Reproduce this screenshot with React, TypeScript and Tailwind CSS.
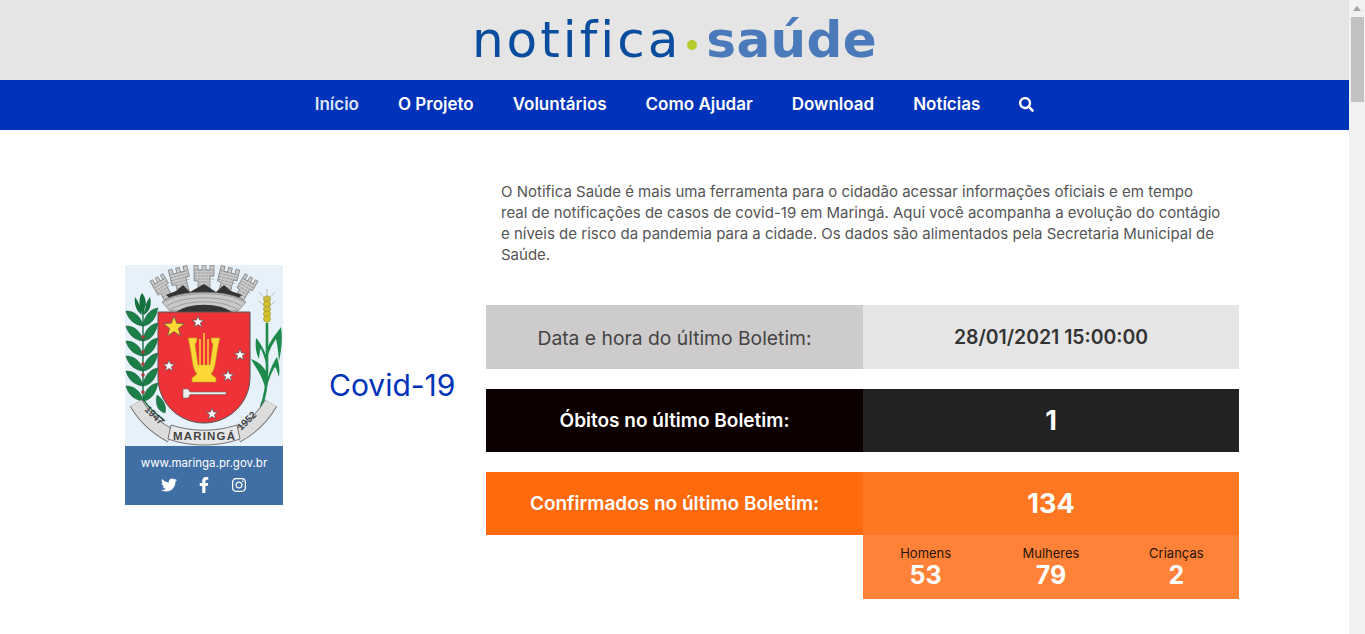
import { FaFacebookF, FaInstagram, FaSearch, FaTwitter } from 'react-icons/fa'

const NAV_ITEMS = ['Início', 'O Projeto', 'Voluntários', 'Como Ajudar', 'Download', 'Notícias']

const BREAKDOWN = [
  { label: 'Homens', value: '53' },
  { label: 'Mulheres', value: '79' },
  { label: 'Crianças', value: '2' },
]

const INTRO_LINES = [
  'O Notifica Saúde é mais uma ferramenta para o cidadão acessar informações oficiais e em tempo',
  'real de notificações de casos de covid-19 em Maringá. Aqui você acompanha a evolução do contágio',
  'e níveis de risco da pandemia para a cidade. Os dados são alimentados pela Secretaria Municipal de',
  'Saúde.',
]

const LEAF_ROWS = [46, 61, 76, 91, 106, 121]

function Star({ x, y, r, fill }: { x: number; y: number; r: number; fill: string }) {
  const points = Array.from({ length: 10 }, (_, i) => {
    const radius = i % 2 === 0 ? r : r * 0.42
    const angle = -Math.PI / 2 + (i * Math.PI) / 5
    return `${x + radius * Math.cos(angle)},${y + radius * Math.sin(angle)}`
  }).join(' ')
  return <polygon points={points} fill={fill} stroke="#555" strokeWidth="0.7" />
}

function Tower({ x, y, w, h, rotate }: { x: number; y: number; w: number; h: number; rotate: number }) {
  const step = w / 5
  return (
    <g transform={`rotate(${rotate} ${x + w / 2} ${y + h})`}>
      <path
        d={`M${x} ${y} h${step} v5 h${step} v-5 h${step} v5 h${step} v-5 h${step} v11 h-${step} V${y + h} H${x + step} V${y + 16} H${x} Z`}
        fill="#c9c9c9"
        stroke="#777"
        strokeWidth="0.7"
      />
      {[5, 8, 11, 14, 17, 20, 23].map(d => (
        <line key={d} x1={x + (d > 16 ? step : 0)} x2={x + w - (d > 16 ? step : 0)} y1={y + d} y2={y + d} stroke="#858585" strokeWidth="0.6" strokeDasharray="3 0.7" />
      ))}
    </g>
  )
}

function Crest() {
  return (
    <svg viewBox="0 0 158 181" className="block w-[158px] h-[181px] bg-[#e6f1fa]">
      {/* crown */}
      <Tower x={37} y={9} w={15} h={26} rotate={-30} />
      <Tower x={106} y={9} w={15} h={26} rotate={30} />
      <Tower x={50} y={2} w={19} h={29} rotate={-14} />
      <Tower x={89} y={2} w={19} h={29} rotate={14} />
      <Tower x={69} y={0} w={20} h={29} rotate={0} />
      <path d="M41 30 L51 26 L58 20 L65 27 L79 19 L91 27 L99 20 L106 26 L117 30 L110 36 H48 Z" fill="#333" />
      <path d="M37 37 C52 24 106 24 121 37 L113 46 H45 Z" fill="#c9c9c9" stroke="#777" strokeWidth="0.7" />
      <path d="M39 37 C54 26 104 26 119 37 M42 41 C57 30 101 30 116 41 M45 45 C60 34 98 34 113 45" fill="none" stroke="#8a8a8a" strokeWidth="0.7" />
      <path d="M50 48 C62 37 96 37 108 48 Z" fill="#333" />

      {/* left branch */}
      <path d="M18 44 V132 C20 140 30 148 40 156" fill="none" stroke="#15713f" strokeWidth="1.4" />
      <path d="M17 28 C22 34 22 42 18 50 C14 42 13 34 17 28 Z M10 32 C14 37 16 43 17 50 C11 46 9 39 10 32 Z M25 32 C21 37 19 43 19 50 C25 46 27 39 25 32 Z" fill="#15713f" />
      {LEAF_ROWS.map(y => (
        <g key={y} fill="#1a8048" stroke="#0c4f2c" strokeWidth="0.5">
          <path d={`M18 ${y + 15} C9 ${y + 14} 3 ${y + 8} 1 ${y} C10 ${y} 16 ${y + 6} 18 ${y + 15} Z`} />
          <path d={`M18 ${y + 15} C27 ${y + 14} 31 ${y + 6} 33 ${y - 3} C25 ${y - 2} 19 ${y + 5} 18 ${y + 15} Z`} />
        </g>
      ))}
      <path d="M40 148 C33 146 30 140 32 130 C38 134 42 141 40 148 Z" fill="#1a8048" stroke="#0c4f2c" strokeWidth="0.5" />
      {[72, 87, 99, 110, 127].map(y => (
        <circle key={y} cx={18} cy={y} r="1.8" fill="#b03a3a" />
      ))}

      {/* right corn and wheat */}
      <path d="M142 58 V106 C142 122 140 132 136 142" fill="none" stroke="#1e8a4c" strokeWidth="2.6" />
      <path d="M142 84 C146 74 152 68 156 62 C158 74 156 88 154 96 C153 84 152 78 151 74 C148 78 145 84 142 92 Z" fill="#1e8a4c" />
      <path d="M142 92 C138 82 134 76 131 73 C130 82 131 88 134 94 C135 86 135 84 136 84 C138 88 140 94 142 102 Z" fill="#1e8a4c" />
      <path d="M142 108 C138 100 132 96 126 94 C130 102 136 108 140 122 Z" fill="#1e8a4c" />
      <path d="M142 116 C145 104 149 96 152 92 C154 98 155 104 154 112 C152 106 151 102 150 102 C147 106 144 114 141 124 Z" fill="#1e8a4c" />
      <path d="M142 30 V58" stroke="#b5a51e" strokeWidth="1" />
      {[34, 39, 44, 49, 54].map(y => (
        <ellipse key={y} cx={142} cy={y} rx="3.6" ry="3" fill="#d5c22a" stroke="#8f8520" strokeWidth="0.5" />
      ))}
      <path d="M142 36 L134 27 M142 36 L150 27 M142 44 L134 36 M142 44 L150 36 M142 32 V24" stroke="#a8a890" strokeWidth="0.6" />

      {/* shield */}
      <path d="M33 47 H125 V112 C125 138 104 158 79 158 C54 158 33 138 33 112 Z" fill="#ee3237" stroke="#555" strokeWidth="1" />
      <Star x={49} y={62} r={11} fill="#fdd835" />
      <Star x={73} y={57} r={6} fill="#fff" />
      <Star x={115} y={90} r={6} fill="#fff" />
      <Star x={44} y={101} r={6} fill="#fff" />
      <Star x={103} y={111} r={6} fill="#fff" />
      <Star x={87} y={149} r={6} fill="#fff" />
      {/* lyre */}
      <path
        fillRule="evenodd"
        d="M63 73 H72 C72 76 71 78 70 79 C71 86 72 94 73 100 H85 C86 94 87 86 88 79 C87 78 86 76 86 73 H95 C93 80 92 88 90 100 C89 104 88 107 86 109 L91 113 V117 H67 V113 L72 109 C70 107 69 104 68 100 C66 88 65 80 63 73 Z"
        fill="#fdd835"
        stroke="#b59b1f"
        strokeWidth="0.6"
      />
      <path d="M75 74 V101 M79 68 V101 M83 74 V101" stroke="#fdd835" strokeWidth="1.4" />
      {/* hammer */}
      <path d="M58 124 H63 L65 127 H101 V129.5 H65 L63 133 H58 Z" fill="#efefef" stroke="#666" strokeWidth="0.6" />

      {/* ribbon */}
      <path d="M11 138 C19 152 31 163 46 171" fill="none" stroke="#666" strokeWidth="14" />
      <path d="M11 138 C19 152 31 163 46 171" fill="none" stroke="#dcdcdc" strokeWidth="12.4" />
      <path d="M146 138 C138 152 127 163 112 171" fill="none" stroke="#666" strokeWidth="14" />
      <path d="M146 138 C138 152 127 163 112 171" fill="none" stroke="#dcdcdc" strokeWidth="12.4" />
      <path d="M46 160 C68 167 90 167 112 160 L115 174 C92 182 66 182 43 174 Z" fill="#e8e8e8" stroke="#555" strokeWidth="0.8" />
      <text x="19" y="145" transform="rotate(44 19 145)" className="font-['Liberation_Sans',sans-serif]" fontSize="10" fontWeight="700" fill="#444">1947</text>
      <text x="116" y="166" transform="rotate(-44 116 166)" className="font-['Liberation_Sans',sans-serif]" fontSize="10" fontWeight="700" fill="#444">1952</text>
      <text x="48" y="175" className="font-['Liberation_Sans',sans-serif]" fontSize="11.5" fontWeight="700" fill="#444" textLength="62">MARINGÁ</text>
    </svg>
  )
}

function Logo() {
  return (
    <div className="h-20 bg-[#e5e5e5] flex items-center justify-center font-['DejaVu_Sans',sans-serif] text-[50px] leading-none">
      <span className="text-[#0a4c9d] tracking-[3px]">notifica</span>
      <span className="w-[10px] h-[10px] rounded-full bg-[#b5cc2a] ml-[6px] mr-[9px] mt-[10px]" />
      <span className="text-[#4a7aba] font-bold tracking-[0.4px]">saúde</span>
    </div>
  )
}

function Nav() {
  return (
    <nav className="h-[50px] bg-[#0033b9] flex items-center justify-center gap-[39px] text-white text-[17px] font-semibold">
      {NAV_ITEMS.map((item, i) => (
        <span key={item} className={i === 0 ? 'text-[#dbe4f5]' : ''}>{item}</span>
      ))}
      <FaSearch className="w-[15px] h-[15px] mt-[-1px]" />
    </nav>
  )
}

interface RowProps {
  label: string
  labelClass: string
  valueClass: string
  value: string
}

function Row({ label, labelClass, value, valueClass }: RowProps) {
  return (
    <div className="flex h-[63px]">
      <div className={`w-[377px] pt-[2px] flex items-center justify-center text-[19px] font-semibold ${labelClass}`}>{label}</div>
      <div className={`w-[376px] pt-[2px] flex items-center justify-center text-[27px] font-bold ${valueClass}`}>{value}</div>
    </div>
  )
}

function Scrollbar() {
  return (
    <div className="w-4 h-full bg-[#f1f1f1] flex flex-col items-center shrink-0">
      <svg viewBox="0 0 16 17" className="w-4 h-[17px] shrink-0">
        <path d="M4 11 L8 6 L12 11 Z" fill="#a3a3a3" />
      </svg>
      <div className="w-[13px] h-[85px] bg-[#c1c1c1]" />
    </div>
  )
}

export default function App() {
  return (
    <div className="flex h-[634px] w-[1365px] overflow-hidden bg-white font-['Inter',sans-serif]">
      <div className="w-[1349px] shrink-0">
        <Logo />
        <Nav />
        <main className="flex pl-[125px]">
          <div className="w-[158px] mt-[135px] shrink-0">
            <Crest />
            <div className="h-[59px] bg-[#406fa5] text-white flex flex-col items-center pt-[10px] gap-[6px]">
              <span className="text-[11.5px] leading-[15px]">www.maringa.pr.gov.br</span>
              <div className="flex items-center gap-[19px] text-[16px]">
                <FaTwitter />
                <FaFacebookF />
                <FaInstagram />
              </div>
            </div>
          </div>
          <h1 className="w-[203px] pl-[46px] mt-[238px] h-[34px] text-[30px] leading-[34px] text-[#0033b9] whitespace-nowrap">
            Covid-19
          </h1>
          <div className="w-[753px] pt-[51px] shrink-0">
            <p className="pl-[15px] text-[15px] leading-[21px] text-[#555] mb-[40px] whitespace-nowrap">
              {INTRO_LINES.map(line => (
                <span key={line} className="block">{line}</span>
              ))}
            </p>
            <div className="flex flex-col">
              <div className="h-[64px] flex">
                <div className="w-[377px] pt-[2px] bg-[#cdcbcb] text-[#444] text-[19.3px] flex items-center justify-center">
                  Data e hora do último Boletim:
                </div>
                <div className="w-[376px] pt-[2px] bg-[#e5e5e5] text-[#333] text-[19.4px] font-semibold flex items-center justify-center">
                  28/01/2021 15:00:00
                </div>
              </div>
              <div className="h-5" />
              <Row
                label="Óbitos no último Boletim:"
                labelClass="bg-[#0d0000] text-white"
                value="1"
                valueClass="bg-[#222222] text-white"
              />
              <div className="h-5" />
              <Row
                label="Confirmados no último Boletim:"
                labelClass="bg-[#ff6a0d] text-white"
                value="134"
                valueClass="bg-[#ff7722] text-white"
              />
              <div className="ml-[377px] w-[376px] h-[64px] bg-[#ff8238] grid grid-cols-3 pt-[10px]">
                {BREAKDOWN.map(b => (
                  <div key={b.label} className="flex flex-col items-center">
                    <span className="text-[13px] leading-4 text-[#2a1407]">{b.label}</span>
                    <span className="text-[25px] leading-[26px] pt-px font-bold text-white">{b.value}</span>
                  </div>
                ))}
              </div>
            </div>
          </div>
        </main>
      </div>
      <Scrollbar />
    </div>
  )
}
